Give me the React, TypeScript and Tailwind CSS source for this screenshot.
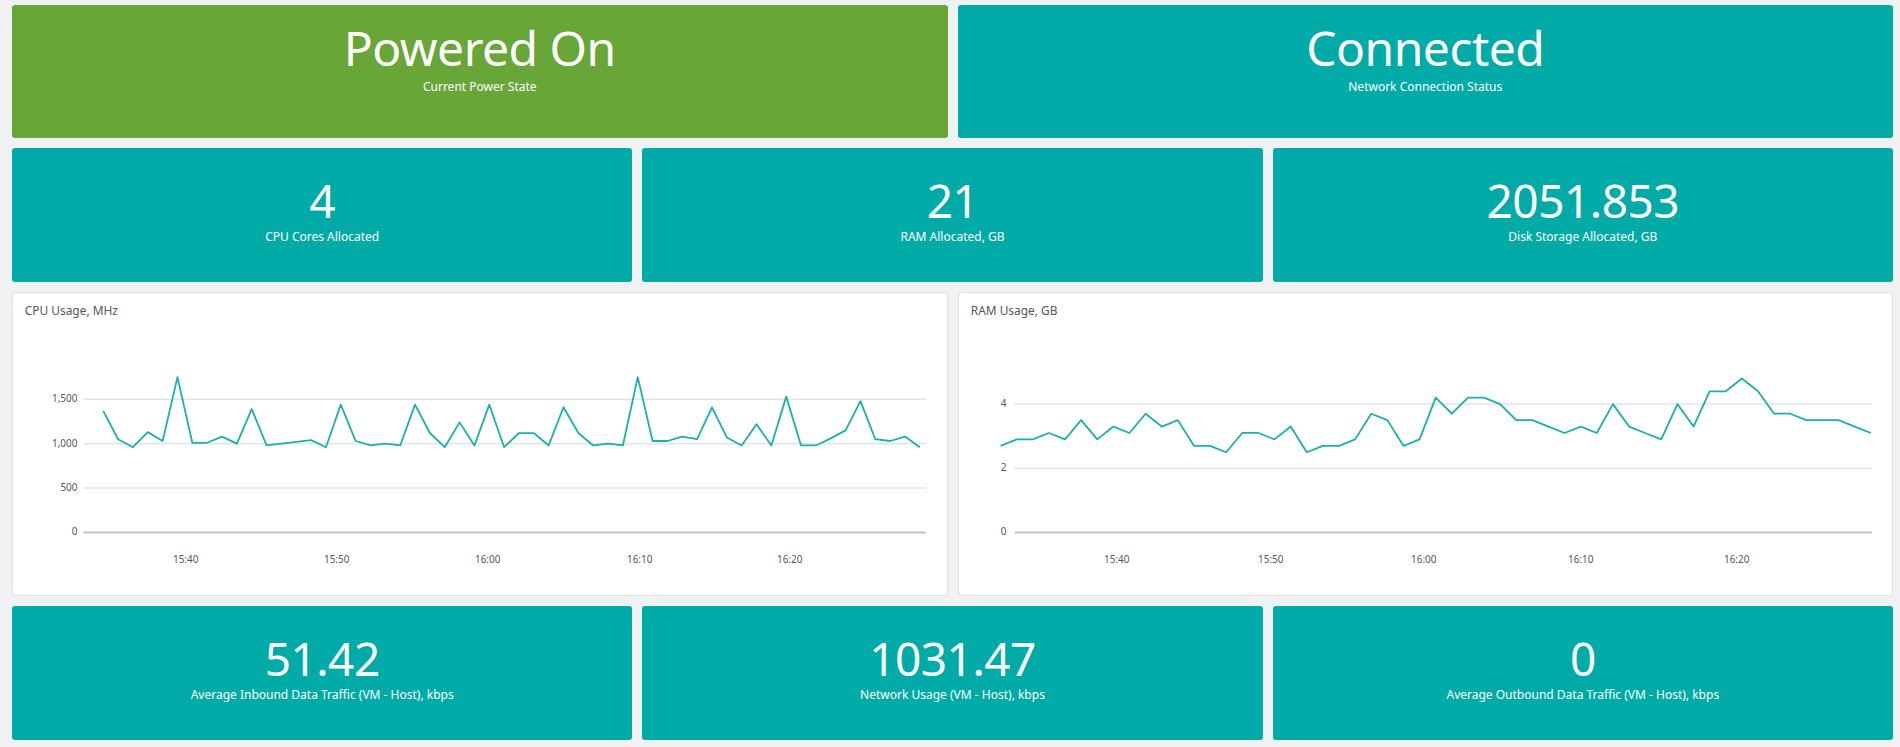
import React from 'react';

const font = { fontFamily: '"Noto Sans", "Open Sans", sans-serif' };

const cpu = [1370,1050,960,1130,1030,1750,1010,1010,1080,1000,1390,980,1000,1020,1040,960,1440,1030,980,1000,980,1440,1120,960,1240,980,1440,960,1120,1120,980,1410,1120,980,1000,980,1750,1030,1030,1080,1050,1410,1070,980,1220,980,1530,980,980,1060,1150,1480,1050,1030,1080,960];
const ram = [2.7,2.9,2.9,3.1,2.9,3.5,2.9,3.3,3.1,3.7,3.3,3.5,2.7,2.7,2.5,3.1,3.1,2.9,3.3,2.5,2.7,2.7,2.9,3.7,3.5,2.7,2.9,4.2,3.7,4.2,4.2,4.0,3.5,3.5,3.3,3.1,3.3,3.1,4.0,3.3,3.1,2.9,4.0,3.3,4.4,4.4,4.8,4.4,3.7,3.7,3.5,3.5,3.5,3.3,3.1];

const Stat = ({ value, label, green, big }: { value: string; label: string; green?: boolean; big?: boolean }) => (
  <div className={`flex-1 rounded-[3px] flex flex-col items-center justify-center text-white ${green ? 'bg-[#68a637]' : 'bg-[#00aba7]'}`}>
    <div className={`${big ? 'text-[48px] -mt-7' : 'text-[46px] -mt-3'} leading-[1.1] tracking-[-0.5px]`}>{value}</div>
    <div className="text-[12px] mt-1.5 leading-none">{label}</div>
  </div>
);

type ChartProps = {
  title: string; data: number[]; max: number; ticks: { v: number; l: string }[];
  gx0: number; lx: number; x0: number; x1: number; xl: number[];
};

const Chart = ({ title, data, max, ticks, gx0, lx, x0, x1, xl }: ChartProps) => {
  const y = (v: number) => 241 - (v / max) * 134;
  const step = (x1 - x0) / (data.length - 1);
  const pts = data.map((v, i) => `${x0 + i * step},${y(v)}`).join(' ');
  return (
    <div className="flex-1 bg-white border border-[#dcdfe3] rounded-[3px]">
      <svg viewBox="0 0 932 304" className="w-full h-full block">
        <text x="8" y="22" fontSize="12" fill="#555">{title}</text>
        {ticks.map((t) => (
          <g key={t.l}>
            <line x1={gx0} x2="915" y1={y(t.v)} y2={y(t.v)} stroke={t.v === 0 ? '#c4c6c9' : '#e2e4e7'} strokeWidth={t.v === 0 ? 2 : 1.5} />
            <text x={lx} y={y(t.v) + 3} fontSize="10" fill="#555" textAnchor="end">{t.l}</text>
          </g>
        ))}
        {['15:40', '15:50', '16:00', '16:10', '16:20'].map((l, i) => (
          <text key={l} x={xl[i]} y="272" fontSize="10" fill="#555" textAnchor="middle">{l}</text>
        ))}
        <polyline points={pts} fill="none" stroke="#1ab1a6" strokeWidth="1.8" strokeLinejoin="round" />
      </svg>
    </div>
  );
};

export default function App() {
  return (
    <div className="w-[1900px] h-[747px] bg-[#f0f1f3] pl-3 pr-[7px] pt-[5px] flex flex-col gap-[10px]" style={font}>
      <div className="h-[133px] flex gap-[10px]">
        <Stat value="Powered On" label="Current Power State" green big />
        <Stat value="Connected" label="Network Connection Status" big />
      </div>
      <div className="h-[134px] flex gap-[10px]">
        <Stat value="4" label="CPU Cores Allocated" />
        <Stat value="21" label="RAM Allocated, GB" />
        <Stat value="2051.853" label="Disk Storage Allocated, GB" />
      </div>
      <div className="h-[304px] flex gap-[10px]">
        <Chart title="CPU Usage, MHz" data={cpu} max={1500} ticks={[{ v: 0, l: '0' }, { v: 500, l: '500' }, { v: 1000, l: '1,000' }, { v: 1500, l: '1,500' }]}
          gx0={67} lx={61} x0={87} x1={909} xl={[170, 322, 474, 627, 778]} />
        <Chart title="RAM Usage, GB" data={ram} max={4.15} ticks={[{ v: 0, l: '0' }, { v: 2, l: '2' }, { v: 4, l: '4' }]}
          gx0={52} lx={44} x0={38} x1={914} xl={[155, 310, 464, 622, 779]} />
      </div>
      <div className="h-[134px] flex gap-[10px]">
        <Stat value="51.42" label="Average Inbound Data Traffic (VM - Host), kbps" />
        <Stat value="1031.47" label="Network Usage (VM - Host), kbps" />
        <Stat value="0" label="Average Outbound Data Traffic (VM - Host), kbps" />
      </div>
    </div>
  );
}
